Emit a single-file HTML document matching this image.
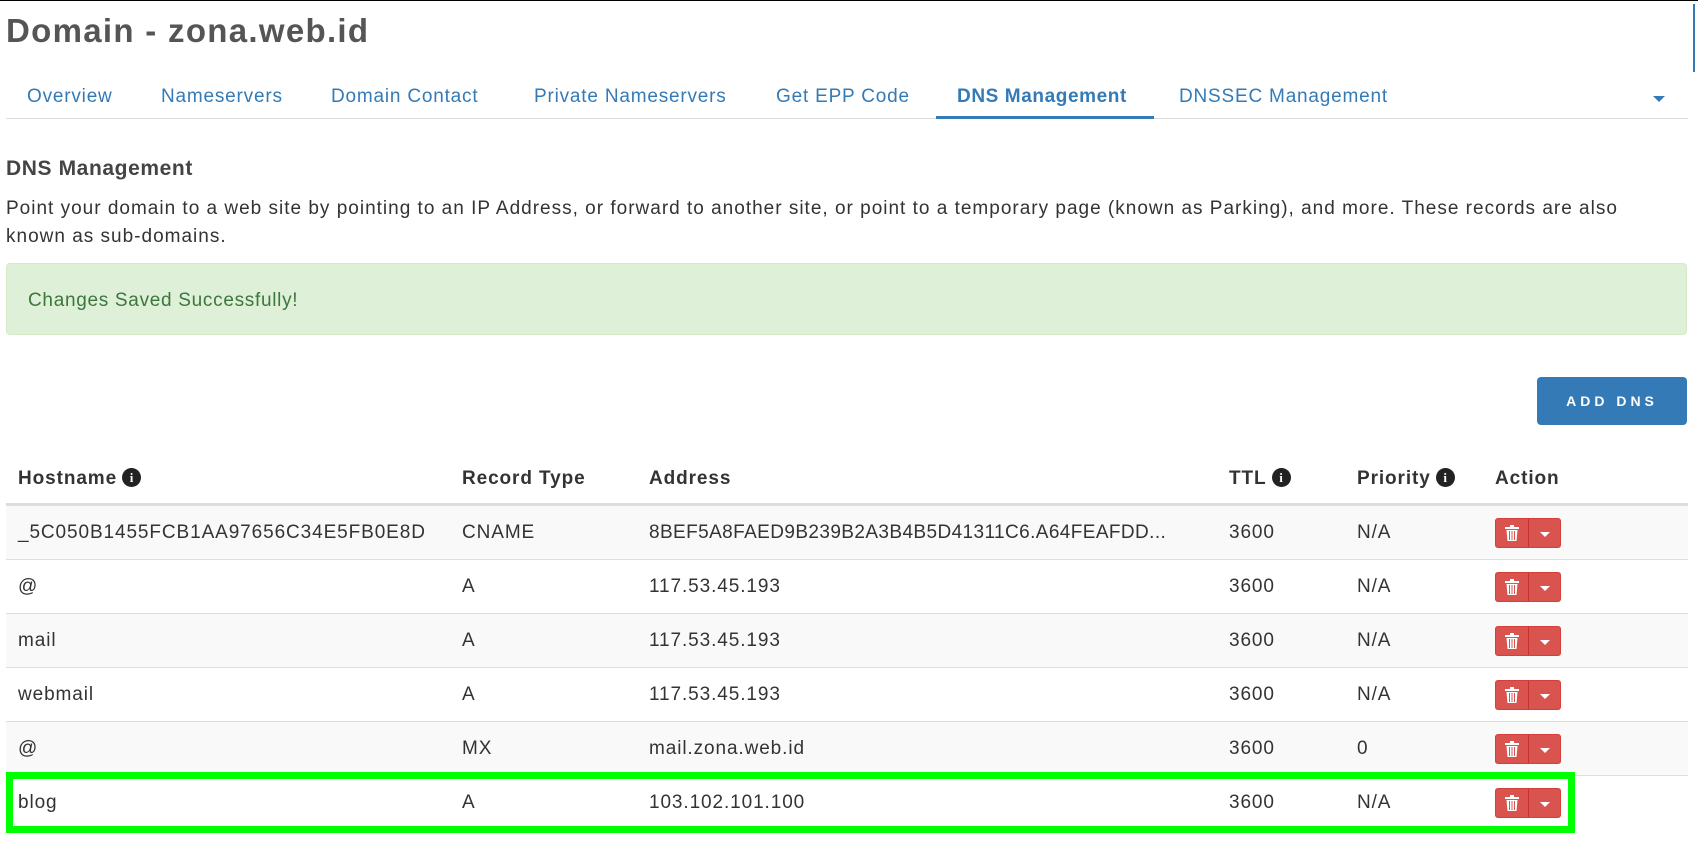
<!DOCTYPE html>
<html><head><meta charset="utf-8"><style>
*{margin:0;padding:0;box-sizing:border-box}
body{width:1698px;height:852px;background:#fff;font-family:"Liberation Sans",sans-serif;color:#333;position:relative;overflow:hidden}
.a{position:absolute;white-space:nowrap}
.tab{position:absolute;top:86px;font-size:19px;color:#337ab7;letter-spacing:0.8px}
.th{position:absolute;top:468px;font-size:19px;font-weight:bold;color:#333;letter-spacing:0.9px}
.row{position:absolute;left:6px;width:1682px;height:54px;border-top:1px solid #ddd}
.row.g{background:#f9f9f9}
.c{position:absolute;top:16px;font-size:19px;color:#333;letter-spacing:0.9px}
.btn{position:absolute;left:1489px;top:12px;width:66px;height:30px;background:#d9534f;border:1px solid #d43f3a;border-radius:3px}
.btn .s{position:absolute;left:32px;top:0;bottom:0;border-left:1px solid #c9302c}
.btn .car{position:absolute;left:44px;top:13px;border-left:5px solid transparent;border-right:5px solid transparent;border-top:5px solid #fff}
.info{display:inline-block;width:19px;height:19px;border-radius:50%;background:#222;color:#fff;font-size:13px;text-align:center;line-height:19px;font-family:"Liberation Serif",serif;font-weight:bold;vertical-align:2px;margin-left:5px;letter-spacing:0}
</style></head><body>
<div class="a" style="left:0;top:0;width:1698px;height:1px;background:#000"></div>
<div class="a" style="left:1693px;top:4px;width:2px;height:68px;background:#337ab7"></div>
<div class="a" style="left:6px;top:12px;font-size:33px;font-weight:bold;color:#555;letter-spacing:1.3px">Domain - zona.web.id</div>
<div class="tab" style="left:27px">Overview</div>
<div class="tab" style="left:161px">Nameservers</div>
<div class="tab" style="left:331px">Domain Contact</div>
<div class="tab" style="left:534px">Private Nameservers</div>
<div class="tab" style="left:776px">Get EPP Code</div>
<div class="tab" style="left:957px;font-weight:bold;letter-spacing:0.6px">DNS Management</div>
<div class="tab" style="left:1179px">DNSSEC Management</div>
<div class="a" style="left:1653px;top:96px;border-left:6px solid transparent;border-right:6px solid transparent;border-top:6px solid #337ab7"></div>
<div class="a" style="left:6px;top:118px;width:1682px;height:1px;background:#ddd"></div>
<div class="a" style="left:936px;top:116px;width:218px;height:3px;background:#337ab7"></div>
<div class="a" style="left:6px;top:157px;font-size:21px;font-weight:bold;color:#444;letter-spacing:0.6px">DNS Management</div>
<div class="a" style="left:6px;top:195px;font-size:19px;color:#333;line-height:28px;letter-spacing:1px">Point your domain to a web site by pointing to an IP Address, or forward to another site, or point to a temporary page (known as Parking), and more. These records are also<br>known as sub-domains.</div>
<div class="a" style="left:6px;top:263px;width:1681px;height:72px;background:#dff0d8;border:1px solid #d6e9c6;border-radius:4px"></div>
<div class="a" style="left:28px;top:290px;font-size:19px;color:#3c763d;letter-spacing:0.7px">Changes Saved Successfully!</div>
<div class="a" style="left:1537px;top:377px;width:150px;height:48px;background:#337ab7;border-radius:4px;color:#fff;font-size:14px;font-weight:bold;letter-spacing:4px;text-align:center;line-height:48px">ADD DNS</div>
<div class="th" style="left:18px">Hostname<span class="info">i</span></div>
<div class="th" style="left:462px">Record Type</div>
<div class="th" style="left:649px">Address</div>
<div class="th" style="left:1229px">TTL<span class="info">i</span></div>
<div class="th" style="left:1357px">Priority<span class="info">i</span></div>
<div class="th" style="left:1495px">Action</div>
<div class="a" style="left:6px;top:503px;width:1682px;height:2px;background:#ddd"></div>

<div class="row g" style="top:505px"><div class="c" style="left:12px">_5C050B1455FCB1AA97656C34E5FB0E8D</div><div class="c" style="left:456px">CNAME</div><div class="c" style="left:643px;letter-spacing:0.4px">8BEF5A8FAED9B239B2A3B4B5D41311C6.A64FEAFDD...</div><div class="c" style="left:1223px">3600</div><div class="c" style="left:1351px">N/A</div><div class="btn"><span class="s"></span><svg style="position:absolute;left:9px;top:6px" width="14" height="16" viewBox="0 0 14 16"><rect x="0" y="2" width="14" height="2" fill="#fff"/><rect x="5" y="0" width="4" height="2" fill="#fff"/><path d="M1.5 5h11l-1 11h-9z" fill="#fff"/><path d="M4.5 6v9M7 6v9M9.5 6v9" stroke="#d9534f" stroke-width="1"/></svg><span class="car"></span></div></div>
<div class="row" style="top:559px"><div class="c" style="left:12px">@</div><div class="c" style="left:456px">A</div><div class="c" style="left:643px">117.53.45.193</div><div class="c" style="left:1223px">3600</div><div class="c" style="left:1351px">N/A</div><div class="btn"><span class="s"></span><svg style="position:absolute;left:9px;top:6px" width="14" height="16" viewBox="0 0 14 16"><rect x="0" y="2" width="14" height="2" fill="#fff"/><rect x="5" y="0" width="4" height="2" fill="#fff"/><path d="M1.5 5h11l-1 11h-9z" fill="#fff"/><path d="M4.5 6v9M7 6v9M9.5 6v9" stroke="#d9534f" stroke-width="1"/></svg><span class="car"></span></div></div>
<div class="row g" style="top:613px"><div class="c" style="left:12px">mail</div><div class="c" style="left:456px">A</div><div class="c" style="left:643px">117.53.45.193</div><div class="c" style="left:1223px">3600</div><div class="c" style="left:1351px">N/A</div><div class="btn"><span class="s"></span><svg style="position:absolute;left:9px;top:6px" width="14" height="16" viewBox="0 0 14 16"><rect x="0" y="2" width="14" height="2" fill="#fff"/><rect x="5" y="0" width="4" height="2" fill="#fff"/><path d="M1.5 5h11l-1 11h-9z" fill="#fff"/><path d="M4.5 6v9M7 6v9M9.5 6v9" stroke="#d9534f" stroke-width="1"/></svg><span class="car"></span></div></div>
<div class="row" style="top:667px"><div class="c" style="left:12px">webmail</div><div class="c" style="left:456px">A</div><div class="c" style="left:643px">117.53.45.193</div><div class="c" style="left:1223px">3600</div><div class="c" style="left:1351px">N/A</div><div class="btn"><span class="s"></span><svg style="position:absolute;left:9px;top:6px" width="14" height="16" viewBox="0 0 14 16"><rect x="0" y="2" width="14" height="2" fill="#fff"/><rect x="5" y="0" width="4" height="2" fill="#fff"/><path d="M1.5 5h11l-1 11h-9z" fill="#fff"/><path d="M4.5 6v9M7 6v9M9.5 6v9" stroke="#d9534f" stroke-width="1"/></svg><span class="car"></span></div></div>
<div class="row g" style="top:721px"><div class="c" style="left:12px">@</div><div class="c" style="left:456px">MX</div><div class="c" style="left:643px">mail.zona.web.id</div><div class="c" style="left:1223px">3600</div><div class="c" style="left:1351px">0</div><div class="btn"><span class="s"></span><svg style="position:absolute;left:9px;top:6px" width="14" height="16" viewBox="0 0 14 16"><rect x="0" y="2" width="14" height="2" fill="#fff"/><rect x="5" y="0" width="4" height="2" fill="#fff"/><path d="M1.5 5h11l-1 11h-9z" fill="#fff"/><path d="M4.5 6v9M7 6v9M9.5 6v9" stroke="#d9534f" stroke-width="1"/></svg><span class="car"></span></div></div>
<div class="row" style="top:775px"><div class="c" style="left:12px">blog</div><div class="c" style="left:456px">A</div><div class="c" style="left:643px">103.102.101.100</div><div class="c" style="left:1223px">3600</div><div class="c" style="left:1351px">N/A</div><div class="btn"><span class="s"></span><svg style="position:absolute;left:9px;top:6px" width="14" height="16" viewBox="0 0 14 16"><rect x="0" y="2" width="14" height="2" fill="#fff"/><rect x="5" y="0" width="4" height="2" fill="#fff"/><path d="M1.5 5h11l-1 11h-9z" fill="#fff"/><path d="M4.5 6v9M7 6v9M9.5 6v9" stroke="#d9534f" stroke-width="1"/></svg><span class="car"></span></div></div>
<div class="a" style="left:6px;top:772px;width:1569px;height:61px;border:7px solid #00ff00"></div>
</body></html>
